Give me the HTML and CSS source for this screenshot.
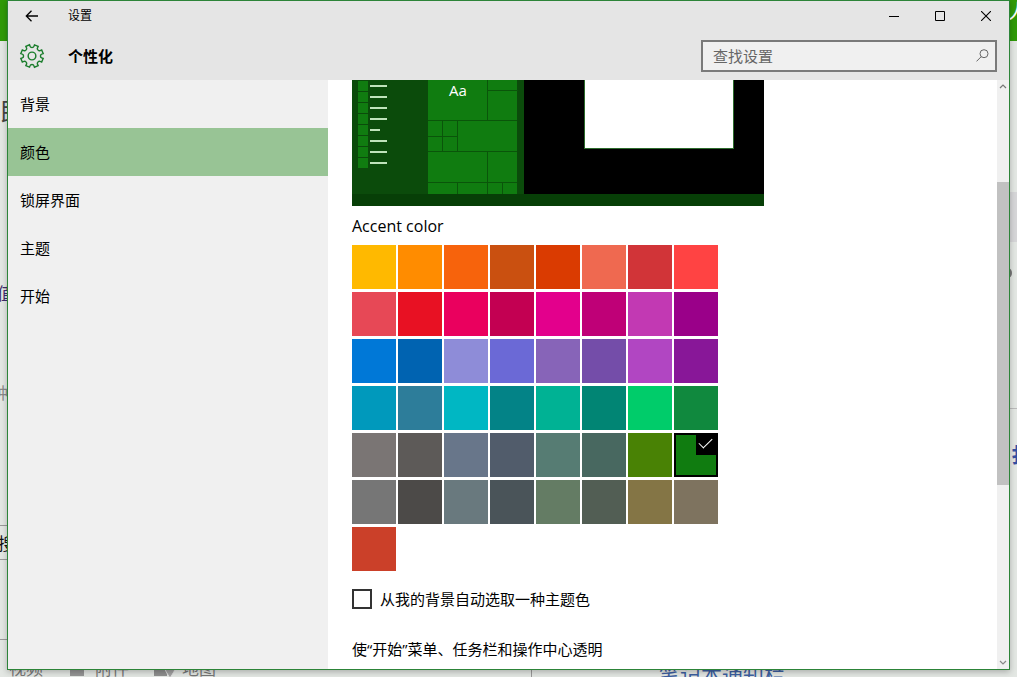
FILE: index.html
```html
<!DOCTYPE html>
<html lang="zh-CN">
<head>
<meta charset="utf-8">
<title>设置</title>
<link rel="stylesheet" href="styles.css">
</head>
<body>
<div class="backdrop" aria-hidden="true">
  <div class="banner"></div>
  <div class="rule rule-left-a"></div>
  <div class="rule rule-left-b"></div>
  <div class="rule rule-left-c"></div>
  <div class="rule rule-right"></div>
  <div class="shade"></div>
  <div class="dot"></div>
  <span class="behind b-min">民</span>
  <span class="behind b-zhi">值</span>
  <span class="behind b-zhong">种</span>
  <span class="behind b-sou">搜</span>
  <span class="behind b-ren">人</span>
  <span class="behind b-jia">扌</span>
  <span class="behind b-video">视频</span>
  <span class="behind b-attach">附件</span>
  <span class="behind b-map">地图</span>
  <span class="behind b-note">笔记本通知栏</span>
  <div class="film"></div>
  <svg class="pin" width="22" height="20" viewBox="0 0 22 20"><path d="M0 2h13v12H0z" fill="#8f8f8f"/><path d="M16 16C12 10 11 8 11 5.500a5 5 0 0 1 10 0C21 8 20 10 16 16z" fill="#a2a2a2" stroke="#e3e3e3"/><circle cx="16" cy="6" r="2" fill="#ddd"/></svg>
  <div class="divider"></div>
</div>

<div class="window">
  <header class="header">
    <div class="titlebar">
      <button class="back" aria-label="返回"><svg width="14" height="12" viewBox="0 0 14 12"><path d="M13 6H1.500M6.500 .8L1.300 6l5.200 5.200" fill="none" stroke="#000" stroke-width="1.300"/></svg></button>
      <span class="title">设置</span>
      <div class="controls">
        <button aria-label="最小化"><svg width="10" height="10" viewBox="0 0 10 10"><path d="M0 5.500h10" stroke="#000"/></svg></button>
        <button aria-label="最大化"><svg width="10" height="10" viewBox="0 0 10 10"><path d="M.5.5h9v9h-9z" fill="none" stroke="#000"/></svg></button>
        <button aria-label="关闭"><svg width="10" height="10" viewBox="0 0 10 10"><path d="M0 0l10 10M10 0L0 10" stroke="#000" stroke-width="1.100"/></svg></button>
      </div>
    </div>
    <div class="heading">
      <svg class="gear" width="26" height="26" viewBox="-13.500 -13.500 27 27" fill="none" stroke="#1b7d2c" stroke-width="1.500">
        <defs><path id="tooth" d="M0-8.800Q1.600-8.800 2-10L2.600-11.600L6.370-10.040L5.660-8.490Q5.090-7.350 6.220-6.220"/></defs>
        <use href="#tooth"/><use href="#tooth" transform="rotate(45)"/><use href="#tooth" transform="rotate(90)"/><use href="#tooth" transform="rotate(135)"/><use href="#tooth" transform="rotate(180)"/><use href="#tooth" transform="rotate(225)"/><use href="#tooth" transform="rotate(270)"/><use href="#tooth" transform="rotate(315)"/>
        <circle r="4"/>
      </svg>
      <h1>个性化</h1>
      <label class="search">
        <input type="text" placeholder="查找设置" aria-label="查找设置">
        <svg width="13" height="13" viewBox="0 0 13 13" fill="none" stroke="#666"><circle cx="8" cy="4.700" r="4"/><path d="M5.200 7.700L.5 12.400"/></svg>
      </label>
    </div>
  </header>

  <div class="body">
    <nav class="sidebar">
      <a href="#">背景</a>
      <a href="#" class="current" aria-current="page">颜色</a>
      <a href="#">锁屏界面</a>
      <a href="#">主题</a>
      <a href="#">开始</a>
    </nav>

    <main class="content">
      <svg class="preview" width="412" height="126" viewBox="0 0 412 126" shape-rendering="crispEdges">
        <path d="M0 0h412v126H0z" fill="#000"/>
        <path d="M0 0h172v114H0z" fill="#0b4b0b"/>
        <path d="M0 114h412v12H0z" fill="#073f07"/>
        <path d="M6 1h10v87H6zM76 0h89v114H76z" fill="#107c10"/>
        <path d="M6 11.500h10m-10 11h10m-10 11h10m-10 11h10m-10 11h10m-10 11h10m-10 11h10" stroke="#0b4b0b"/>
        <path d="M76 40.500h89M76 71.500h89M76 102.500h89M135.500 10.500h30M135.500 0v40M76 56.500h29M90.500 41v30M105.500 41v30M135.500 71v43M105.500 103v11M150.500 103v11" stroke="#0a550a"/>
        <path d="M18 6h17m-17 11h17m-17 11h17m-17 11h17m-17 11h10m-10 11h17m-17 11h17m-17 11h17" stroke="#bfe3bb" stroke-width="2"/>
        <path d="M232 0h150v69H232z" fill="#2c6b2c"/>
        <path d="M233 0h148v68H233z" fill="#fff"/>
        <text x="97" y="16" class="preview-text">Aa</text>
      </svg>

      <h2 id="accent">Accent color</h2>
      <div class="palette" role="radiogroup" aria-labelledby="accent">
        <input type="radio" name="accent" aria-label="1" class="c1">
        <input type="radio" name="accent" aria-label="2" class="c2">
        <input type="radio" name="accent" aria-label="3" class="c3">
        <input type="radio" name="accent" aria-label="4" class="c4">
        <input type="radio" name="accent" aria-label="5" class="c5">
        <input type="radio" name="accent" aria-label="6" class="c6">
        <input type="radio" name="accent" aria-label="7" class="c7">
        <input type="radio" name="accent" aria-label="8" class="c8">
        <input type="radio" name="accent" aria-label="9" class="c9">
        <input type="radio" name="accent" aria-label="10" class="c10">
        <input type="radio" name="accent" aria-label="11" class="c11">
        <input type="radio" name="accent" aria-label="12" class="c12">
        <input type="radio" name="accent" aria-label="13" class="c13">
        <input type="radio" name="accent" aria-label="14" class="c14">
        <input type="radio" name="accent" aria-label="15" class="c15">
        <input type="radio" name="accent" aria-label="16" class="c16">
        <input type="radio" name="accent" aria-label="17" class="c17">
        <input type="radio" name="accent" aria-label="18" class="c18">
        <input type="radio" name="accent" aria-label="19" class="c19">
        <input type="radio" name="accent" aria-label="20" class="c20">
        <input type="radio" name="accent" aria-label="21" class="c21">
        <input type="radio" name="accent" aria-label="22" class="c22">
        <input type="radio" name="accent" aria-label="23" class="c23">
        <input type="radio" name="accent" aria-label="24" class="c24">
        <input type="radio" name="accent" aria-label="25" class="c25">
        <input type="radio" name="accent" aria-label="26" class="c26">
        <input type="radio" name="accent" aria-label="27" class="c27">
        <input type="radio" name="accent" aria-label="28" class="c28">
        <input type="radio" name="accent" aria-label="29" class="c29">
        <input type="radio" name="accent" aria-label="30" class="c30">
        <input type="radio" name="accent" aria-label="31" class="c31">
        <input type="radio" name="accent" aria-label="32" class="c32">
        <input type="radio" name="accent" aria-label="33" class="c33">
        <input type="radio" name="accent" aria-label="34" class="c34">
        <input type="radio" name="accent" aria-label="35" class="c35">
        <input type="radio" name="accent" aria-label="36" class="c36">
        <input type="radio" name="accent" aria-label="37" class="c37">
        <input type="radio" name="accent" aria-label="38" class="c38">
        <input type="radio" name="accent" aria-label="39" class="c39">
        <input type="radio" name="accent" aria-label="40" class="c40" checked>
        <input type="radio" name="accent" aria-label="41" class="c41">
        <input type="radio" name="accent" aria-label="42" class="c42">
        <input type="radio" name="accent" aria-label="43" class="c43">
        <input type="radio" name="accent" aria-label="44" class="c44">
        <input type="radio" name="accent" aria-label="45" class="c45">
        <input type="radio" name="accent" aria-label="46" class="c46">
        <input type="radio" name="accent" aria-label="47" class="c47">
        <input type="radio" name="accent" aria-label="48" class="c48">
        <input type="radio" name="accent" aria-label="49" class="c49">
      </div>

      <label class="auto"><input type="checkbox">从我的背景自动选取一种主题色</label>
      <p class="transparent">使“开始”菜单、任务栏和操作中心透明</p>
    </main>

    <div class="scrollbar" aria-hidden="true">
      <svg width="8" height="12" viewBox="0 0 8 12"><path d="M1 8l3-3 3 3" fill="none" stroke="#777" stroke-width="1.200"/></svg>
      <div class="track"><div class="before"></div><div class="thumb"></div><div class="after"></div></div>
      <svg width="8" height="12" viewBox="0 0 8 12"><path d="M1 4l3 3 3-3" fill="none" stroke="#888" stroke-width="1.200"/></svg>
    </div>
  </div>
</div>
</body>
</html>
```
FILE: styles.css
```css
* { box-sizing: border-box; }

body {
  margin: 0;
  height: 100vh;
  padding: 0 7px 7px;
  overflow: hidden;
  background: #e2e2e3;
  color: #000;
  font: 15px/20px "Open Sans", "Noto Sans CJK SC", sans-serif;
}

button { border: 0; padding: 0; background: none; display: flex; align-items: center; justify-content: center; }

/* Page lying under the window */
.backdrop { position: absolute; inset: 0; overflow: hidden; background: #e3e7e3; }
.banner { height: 41px; background: #2f9a08; }
.behind { position: absolute; white-space: nowrap; color: #444; }
.b-min { left: 0; top: 96px; font-size: 24px; line-height: 30px; }
.b-zhi { left: -3px; top: 284px; font-size: 17px; color: #3b2b6b; }
.b-zhong { left: -8px; top: 383px; font-size: 16px; color: #888; }
.b-sou { left: -2px; top: 534px; font-size: 17px; color: #111; }
.b-ren { left: 1008px; top: 2px; font-size: 20px; color: #fff; }
.b-jia { left: 1011px; top: 446px; font-size: 20px; font-weight: 700; color: #3450a4; }
.b-video { left: 9px; top: 659px; font-size: 17px; color: #777; }
.b-attach { left: 95px; top: 659px; font-size: 17px; color: #777; }
.b-map { left: 182px; top: 659px; font-size: 17px; color: #777; }
.b-note { left: 659px; top: 663px; font-size: 21px; line-height: 24px; color: #3d5fa0; }
.film { position: absolute; left: 70px; top: 664px; width: 14px; height: 12px; background: #959595; }
.pin { position: absolute; left: 154px; top: 662px; }
.divider { position: absolute; left: 531px; top: 660px; width: 1px; height: 17px; background: #999; }
.rule { position: absolute; width: 8px; height: 1px; background: #999; }
.rule-left-a { left: 0; top: 525px; }
.rule-left-b { left: 0; top: 559px; }
.rule-left-c { left: 0; top: 639px; }
.rule-right { left: 1009px; top: 408px; background: #bbb; }
.shade { position: absolute; left: 1009px; top: 192px; width: 8px; height: 50px; background: #d6d6d8; }
.dot { position: absolute; left: 1004px; top: 268px; width: 8px; height: 10px; border-radius: 50%; background: #777; }

.window {
  position: relative;
  height: 100%;
  display: flex;
  flex-direction: column;
  border: 1px solid #2c8438;
  background: #fff;
  box-shadow: 0 2px 6px rgba(0, 0, 0, .25);
}

.header { background: #e5e5e5; }
.titlebar { display: flex; align-items: center; height: 30px; }
.back { width: 48px; height: 30px; }
.title { margin-left: 12px; font-size: 12px; }
.controls { display: flex; margin-left: auto; }
.controls button { width: 46px; height: 30px; }
.heading { display: flex; align-items: center; height: 49px; padding: 0 12px 0 11px; }
h1 { margin: 0 auto 0 23px; font-size: 15px; line-height: 20px; font-weight: 700; }
.search {
  display: flex;
  align-items: center;
  width: 296px;
  height: 32px;
  padding: 0 6px 0 10px;
  border: 2px solid #7a7a7a;
  background: #f0f0f0;
}
.search input {
  flex: 1;
  min-width: 0;
  padding: 0;
  border: 0;
  outline: 0;
  background: none;
  font: inherit;
}
.search input::placeholder { color: #666; opacity: 1; }

.body { flex: 1; min-height: 0; display: flex; }
.sidebar { width: 320px; background: #f0f0f0; }
.sidebar a { display: flex; align-items: center; height: 48px; padding: 0 12px; color: #000; text-decoration: none; }
.sidebar .current { background: #98c495; }

.content { flex: 1; min-width: 0; padding: 0 24px; overflow: hidden; }
.preview { display: block; }
.preview-text { font-size: 15px; fill: #fff; }
h2 { margin: 10px 0 9px; font-size: 16px; line-height: 20px; font-weight: 400; }

.palette { display: grid; grid-template-columns: repeat(8, 44px); gap: 3px 2px; }
.palette input { appearance: none; position: relative; width: 44px; height: 44px; margin: 0; }
.palette input:checked { border: 2px solid #000; }
.palette input:checked::before {
  content: "";
  position: absolute;
  top: -2px;
  right: -2px;
  width: 22px;
  height: 22px;
  background: #000;
}
.palette input:checked::after {
  content: "";
  position: absolute;
  top: 3px;
  right: 4px;
  width: 12px;
  height: 6px;
  border: solid #fff;
  border-width: 0 0 1px 1px;
  transform: rotate(-45deg);
}
.c1 { background: #ffb900; } .c2 { background: #ff8c00; } .c3 { background: #f7630c; } .c4 { background: #ca5010; }
.c5 { background: #da3b01; } .c6 { background: #ef6950; } .c7 { background: #d13438; } .c8 { background: #ff4343; }
.c9 { background: #e74856; } .c10 { background: #e81123; } .c11 { background: #ea005e; } .c12 { background: #c30052; }
.c13 { background: #e3008c; } .c14 { background: #bf0077; } .c15 { background: #c239b3; } .c16 { background: #9a0089; }
.c17 { background: #0078d7; } .c18 { background: #0063b1; } .c19 { background: #8e8cd8; } .c20 { background: #6b69d6; }
.c21 { background: #8764b8; } .c22 { background: #744da9; } .c23 { background: #b146c2; } .c24 { background: #881798; }
.c25 { background: #0099bc; } .c26 { background: #2d7d9a; } .c27 { background: #00b7c3; } .c28 { background: #038387; }
.c29 { background: #00b294; } .c30 { background: #018574; } .c31 { background: #00cc6a; } .c32 { background: #10893e; }
.c33 { background: #7a7574; } .c34 { background: #5d5a58; } .c35 { background: #68768a; } .c36 { background: #515c6b; }
.c37 { background: #567c73; } .c38 { background: #486860; } .c39 { background: #498205; } .c40 { background: #107c10; }
.c41 { background: #767676; } .c42 { background: #4c4a48; } .c43 { background: #69797e; } .c44 { background: #4a5459; }
.c45 { background: #647c64; } .c46 { background: #525e54; } .c47 { background: #847545; } .c48 { background: #7e735f; }
.c49 { background: #cb4029; }

.auto { display: flex; align-items: center; gap: 8px; margin-top: 18px; }
.auto input { appearance: none; width: 20px; height: 20px; margin: 0; border: 2px solid #333; background: #fff; }
.transparent { margin: 30px 0 0; }

.scrollbar { display: flex; flex-direction: column; align-items: center; width: 12px; background: #f0f0f0; }
.track { flex: 1; align-self: stretch; display: flex; flex-direction: column; }
.before { flex: 90; }
.thumb { flex: 303; background: #c1c1c1; }
.after { flex: 172; }
```
